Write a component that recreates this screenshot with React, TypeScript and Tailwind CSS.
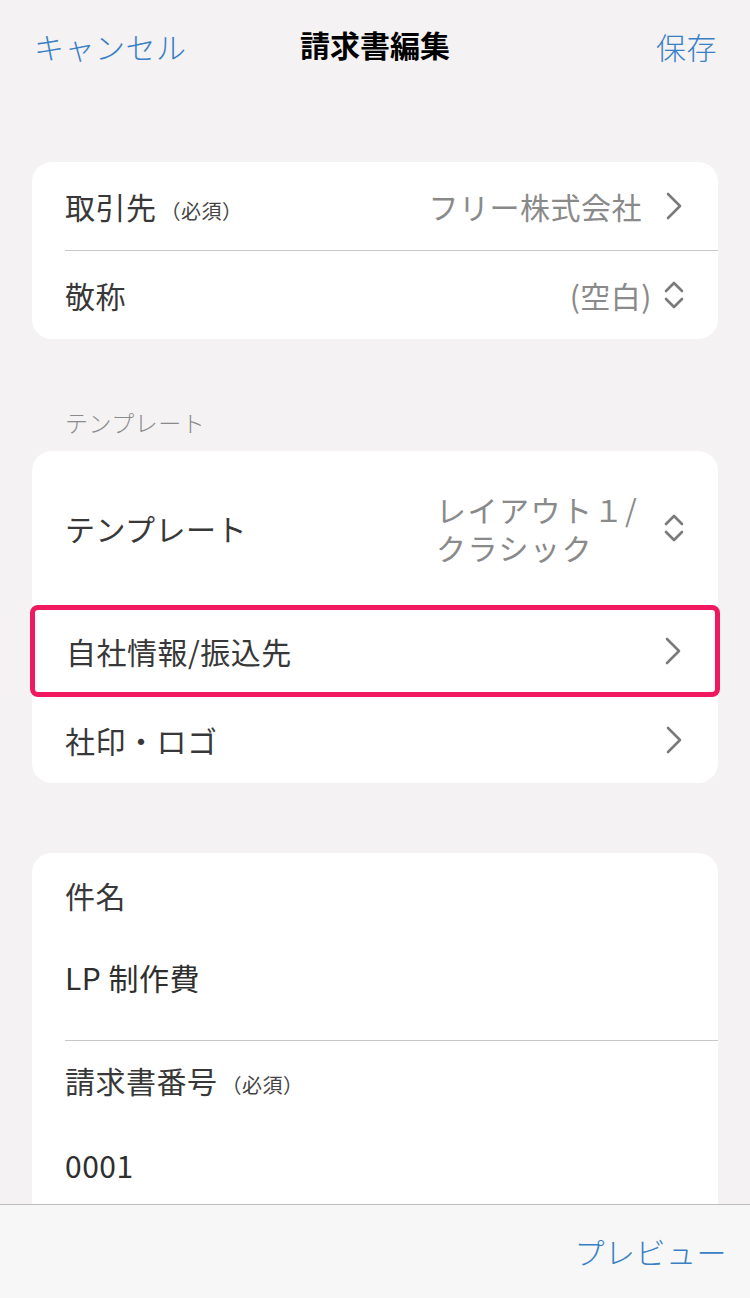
import React from 'react';

const font = { fontFamily: '"Noto Sans CJK JP", "Noto Sans", sans-serif' };

const Chevron = () => (
  <svg width="20" height="30" viewBox="0 0 20 30" className="shrink-0">
    <path d="M4 3 L16 15 L4 27" fill="none" stroke="#7a7a7a" strokeWidth="2.6" strokeLinecap="round" strokeLinejoin="round" />
  </svg>
);

const UpDown = () => (
  <svg width="24" height="30" viewBox="0 0 24 30" className="shrink-0">
    <path d="M4 11 L12 3 L20 11" fill="none" stroke="#7a7a7a" strokeWidth="2.6" strokeLinecap="round" strokeLinejoin="round" />
    <path d="M4 19 L12 27 L20 19" fill="none" stroke="#7a7a7a" strokeWidth="2.6" strokeLinecap="round" strokeLinejoin="round" />
  </svg>
);

const Req = () => <span className="text-[20px] ml-1 text-[#444444]">（必須）</span>;

const App: React.FC = () => {
  return (
    <div className="relative w-[750px] h-[1298px] overflow-hidden bg-[#f4f2f3] text-[#383838] tracking-[0.5px]" style={font}>
      {/* Nav */}
      <div className="relative flex items-center justify-between h-[96px] pl-[34px] pr-[33px] pb-[4px]">
        <span className="text-[30px] text-[#3a80c5] font-light">キャンセル</span>
        <span className="absolute left-1/2 -translate-x-1/2 -translate-y-[2px] text-[30px] font-bold text-black tracking-normal">請求書編集</span>
        <span className="text-[30px] text-[#3a80c5] font-light">保存</span>
      </div>

      <div className="px-[32px] pt-[66px]">
        {/* Card 1 */}
        <div className="bg-white rounded-[20px] overflow-hidden">
          <div className="flex items-center justify-between h-[88px] pl-[33px] pr-[34px]">
            <span className="text-[30px] flex items-baseline">取引先<Req /></span>
            <div className="flex items-center gap-[22px]">
              <span className="text-[30px] text-[#8a8a8a]">フリー株式会社</span>
              <Chevron />
            </div>
          </div>
          <div className="ml-[33px] border-t border-[#c8c8c8]" />
          <div className="flex items-center justify-between h-[88px] pl-[33px] pr-[32px]">
            <span className="text-[30px]">敬称</span>
            <div className="flex items-center gap-[10px]">
              <span className="text-[30px] text-[#8a8a8a]">(空白)</span>
              <UpDown />
            </div>
          </div>
        </div>

        {/* Section header */}
        <div className="pl-[33px] pt-[66px] pb-[12px] text-[23px] text-[#8a8a8a] leading-[34px] font-light">テンプレート</div>

        {/* Card 2 */}
        <div className="bg-white rounded-[20px]">
          <div className="flex items-center justify-between h-[154px] pl-[33px] pr-[32px]">
            <span className="text-[30px]">テンプレート</span>
            <div className="flex items-center gap-[12px]">
              <div className="w-[214px] text-[30px] leading-[38px] text-[#8a8a8a] tracking-[1.5px]">
                <div>レイアウト１/</div>
                <div>クラシック</div>
              </div>
              <UpDown />
            </div>
          </div>
          <div className="flex items-center justify-between h-[92px] pl-[31px] pr-[32px] mx-[-2px] border-[5px] border-[#f0185e] rounded-[8px]">
            <span className="text-[30px]">自社情報/振込先</span>
            <Chevron />
          </div>
          <div className="flex items-center justify-between h-[86px] pl-[33px] pr-[34px]">
            <span className="text-[30px]">社印・ロゴ</span>
            <Chevron />
          </div>
        </div>

        {/* Card 3 */}
        <div className="mt-[70px] bg-white rounded-t-[20px]">
          <div className="pl-[33px] pt-[20px] text-[30px] leading-[44px]">件名</div>
          <div className="pl-[33px] pt-[38px] pb-[41px] text-[30px] leading-[44px] text-[#2e2e2e]">LP 制作費</div>
          <div className="ml-[33px] border-t border-[#c8c8c8]" />
          <div className="pl-[33px] pt-[17px] text-[30px] leading-[44px] flex items-baseline">請求書番号<Req /></div>
          <div className="pl-[33px] pt-[36px] pb-[40px] text-[30px] leading-[44px] text-[#2e2e2e]">0001</div>
        </div>
      </div>

      {/* Bottom toolbar */}
      <div className="absolute left-0 right-0 bottom-0 h-[94px] bg-[#f7f7f7] border-t border-[#bdbdbd] flex items-center justify-end pr-[23px]">
        <span className="text-[30px] text-[#3a80c5] font-light">プレビュー</span>
      </div>
    </div>
  );
};

export default App;
